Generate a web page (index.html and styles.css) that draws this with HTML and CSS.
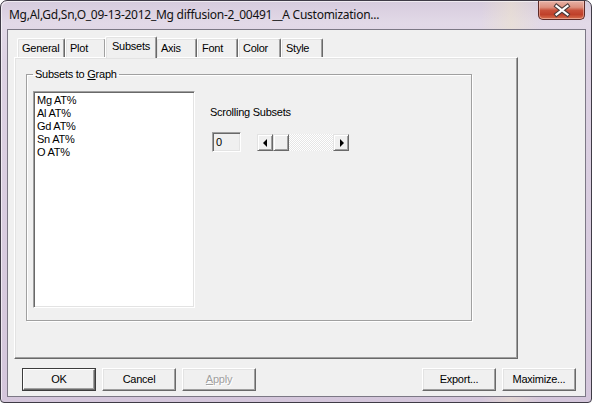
FILE: index.html
```html
<!DOCTYPE html>
<html>
<head>
<meta charset="utf-8">
<link rel="stylesheet" href="styles.css">
</head>
<body>
<div class="window">
  <div class="titlebar">
    <span class="title">Mg,Al,Gd,Sn,O_09-13-2012_Mg diffusion-2_00491__A Customization...</span>
    <div class="close">
      <svg width="45" height="18" viewBox="0 0 45 18">
        <path d="M17.5 5 L28.5 13.5 M28.5 5 L17.5 13.5" stroke="#4a3a3a" stroke-width="4.2" stroke-linecap="square" fill="none"/>
        <path d="M17.5 5 L28.5 13.5 M28.5 5 L17.5 13.5" stroke="#ffffff" stroke-width="2.2" stroke-linecap="square" fill="none"/>
      </svg>
    </div>
  </div>
  <div class="client">
    <div class="tabs">
      <div class="tab t-general">General</div>
      <div class="tab t-plot">Plot</div>
      <div class="tab t-subsets selected">Subsets</div>
      <div class="tab t-axis">Axis</div>
      <div class="tab t-font">Font</div>
      <div class="tab t-color">Color</div>
      <div class="tab t-style">Style</div>
    </div>
    <div class="panel">
      <fieldset class="group">
        <legend>Subsets to <u>G</u>raph</legend>
        <div class="group-body">
          <div class="listbox">
            <div class="item">Mg AT%</div>
            <div class="item">Al AT%</div>
            <div class="item">Gd AT%</div>
            <div class="item">Sn AT%</div>
            <div class="item">O AT%</div>
          </div>
          <div class="scroll-col">
            <div class="label">Scrolling Subsets</div>
            <div class="scroll-row">
              <div class="edit">0</div>
              <div class="hscroll">
                <div class="sb-btn"><span class="arrow-left"></span></div>
                <div class="sb-thumb"></div>
                <div class="sb-track"></div>
                <div class="sb-btn"><span class="arrow-right"></span></div>
              </div>
            </div>
          </div>
        </div>
      </fieldset>
    </div>
    <div class="buttons">
      <div class="btn default"><span class="btn-in">OK</span></div>
      <div class="btn">Cancel</div>
      <div class="btn disabled"><span><u>A</u>pply</span></div>
      <div class="spacer"></div>
      <div class="btn">Export...</div>
      <div class="btn">Maximize...</div>
    </div>
  </div>
</div>
</body>
</html>
```

FILE: styles.css
```css
html, body {
  margin: 0;
  padding: 0;
  background: #ffffff;
}
body {
  font-family: "Liberation Sans", Arial, sans-serif;
  font-size: 11px;
  letter-spacing: -0.25px;
  color: #000;
}
.window {
  width: 592px;
  height: 403px;
  box-sizing: border-box;
  border: 1px solid #3f3b46;
  border-radius: 7px 7px 4px 4px;
  background:
    linear-gradient(90deg, rgba(255,255,255,0) 0, rgba(255,255,255,0) 480px, rgba(240,230,200,0.45) 510px, rgba(240,230,200,0) 540px),
    linear-gradient(180deg, #d6cbdd 0, #e2d9e7 22px, #ddd2e3 60px, #d4c6db 100%);
  box-shadow: inset 1px 1px 0 rgba(255,255,255,0.6);
  display: flex;
  flex-direction: column;
  padding: 0 5px 5px 6px;
}
.titlebar {
  height: 28px;
  flex: none;
  display: flex;
  justify-content: space-between;
  align-items: center;
}
.title {
  font-family: "Noto Sans", "Open Sans", sans-serif;
  font-size: 12px;
  letter-spacing: -0.26px;
  color: #111;
  padding-left: 2px;
  padding-bottom: 1px;
  white-space: nowrap;
}
.close {
  align-self: flex-start;
  width: 47px;
  height: 19px;
  box-sizing: border-box;
  margin-right: 1px;
  border: 1px solid #5d2a26;
  border-top: none;
  border-radius: 0 0 5px 5px;
  background: linear-gradient(180deg, #e7b2a6 0, #dd8f7d 35%, #c8503a 52%, #c0402a 75%, #d8704f 100%);
  box-shadow: inset 0 0 0 1px rgba(255,220,210,0.45);
  display: flex;
  align-items: center;
  justify-content: center;
}
.close svg { display: block; }
.client {
  flex: 1;
  border: 1px solid #7c7885;
  background: #f0f0f0;
  display: flex;
  flex-direction: column;
  padding: 6px 0 0 6px;
}
.tabs {
  display: flex;
  align-items: flex-end;
  height: 21px;
  padding-left: 3px;
  position: relative;
  z-index: 1;
}
.tab {
  height: 19px;
  box-sizing: border-box;
  border-top: 1px solid #ffffff;
  border-left: 1px solid #ffffff;
  border-right: 1px solid #696969;
  border-radius: 2px 2px 0 0;
  box-shadow: inset -1px 0 0 #a0a0a0, inset 1px 1px 0 #e3e3e3;
  background: #f0f0f0;
  padding: 3px 0 0 4px;
  line-height: 13px;
}
.t-general { width: 48px; }
.t-plot { width: 41px; }
.t-subsets { width: 52px; }
.t-axis { width: 41px; }
.t-font { width: 41px; }
.t-color { width: 43px; }
.t-style { width: 42px; }
.tab.selected {
  height: 22px;
  margin: 0 -1px -1px -1px;
  padding: 3px 0 0 6px;
  position: relative;
  z-index: 2;
}
.panel {
  width: 504px;
  height: 302px;
  box-sizing: border-box;
  flex: none;
  border-top: 1px solid #ffffff;
  border-left: 1px solid #ffffff;
  border-right: 1px solid #696969;
  border-bottom: 1px solid #696969;
  box-shadow: inset -1px -1px 0 #a0a0a0, inset 1px 1px 0 #e3e3e3;
  padding: 10px 0 0 11px;
}
.group {
  margin: 0;
  width: 446px;
  height: 253px;
  box-sizing: border-box;
  border: 1px solid #a0a0a0;
  box-shadow: inset 1px 1px 0 #ffffff, 1px 1px 0 #ffffff;
  padding: 10px 0 0 6px;
  min-width: 0;
}
.group legend {
  padding: 0 2px;
  margin-left: 0;
  line-height: 13px;
}
.group-body {
  display: flex;
  align-items: flex-start;
}
.listbox {
  width: 162px;
  height: 217px;
  box-sizing: border-box;
  background: #ffffff;
  border-top: 1px solid #a0a0a0;
  border-left: 1px solid #a0a0a0;
  border-right: 1px solid #ffffff;
  border-bottom: 1px solid #ffffff;
  box-shadow: inset 1px 1px 0 #696969, inset -1px -1px 0 #e3e3e3;
  padding: 2px 0 0 3px;
}
.item {
  line-height: 13px;
  height: 13px;
  white-space: nowrap;
}
.scroll-col {
  margin-left: 15px;
  padding-top: 15px;
}
.label {
  line-height: 13px;
}
.scroll-row {
  display: flex;
  align-items: flex-start;
  margin-top: 13px;
  margin-left: 2px;
}
.edit {
  width: 29px;
  height: 20px;
  box-sizing: border-box;
  border-top: 1px solid #a0a0a0;
  border-left: 1px solid #a0a0a0;
  border-right: 1px solid #ffffff;
  border-bottom: 1px solid #ffffff;
  box-shadow: inset 1px 1px 0 #696969, inset -1px -1px 0 #e3e3e3;
  background: #f0f0f0;
  padding: 3px 0 0 3px;
  line-height: 13px;
}
.hscroll {
  display: flex;
  width: 92px;
  height: 17px;
  margin-left: 16px;
  margin-top: 2px;
}
.sb-btn, .sb-thumb {
  width: 16px;
  height: 17px;
  box-sizing: border-box;
  flex: none;
  background: #f0f0f0;
  border-top: 1px solid #e3e3e3;
  border-left: 1px solid #e3e3e3;
  border-right: 1px solid #696969;
  border-bottom: 1px solid #696969;
  box-shadow: inset 1px 1px 0 #ffffff, inset -1px -1px 0 #a0a0a0;
  display: flex;
  align-items: center;
  justify-content: center;
}
.sb-track {
  flex: 1;
  height: 17px;
  background: repeating-conic-gradient(#ffffff 0 25%, #e6e6e6 0 50%) 0 0 / 2px 2px;
}
.arrow-left {
  width: 0;
  height: 0;
  border-top: 4px solid transparent;
  border-bottom: 4px solid transparent;
  border-right: 4px solid #000;
  margin-left: -1px;
}
.arrow-right {
  width: 0;
  height: 0;
  border-top: 4px solid transparent;
  border-bottom: 4px solid transparent;
  border-left: 4px solid #000;
  margin-left: 1px;
}
.buttons {
  display: flex;
  gap: 6px;
  margin-top: 9px;
  padding-left: 8px;
  padding-right: 9px;
}
.spacer { flex: 1; }
.btn {
  width: 74px;
  height: 23px;
  box-sizing: border-box;
  flex: none;
  background: #f0f0f0;
  border-top: 1px solid #ffffff;
  border-left: 1px solid #ffffff;
  border-right: 1px solid #696969;
  border-bottom: 1px solid #696969;
  box-shadow: inset -1px -1px 0 #a0a0a0, inset 1px 1px 0 #e3e3e3;
  display: flex;
  align-items: center;
  justify-content: center;
  line-height: 13px;
}
.btn.default {
  border: 1px solid #3c3c3c;
  box-shadow: none;
  padding: 0;
}
.btn-in {
  flex: 1;
  align-self: stretch;
  display: flex;
  align-items: center;
  justify-content: center;
  border-top: 1px solid #ffffff;
  border-left: 1px solid #ffffff;
  border-right: 1px solid #696969;
  border-bottom: 1px solid #696969;
  box-shadow: inset -1px -1px 0 #a0a0a0;
}
.btn.disabled {
  color: #a0a0a0;
  text-shadow: 1px 1px 0 #ffffff;
}
```
